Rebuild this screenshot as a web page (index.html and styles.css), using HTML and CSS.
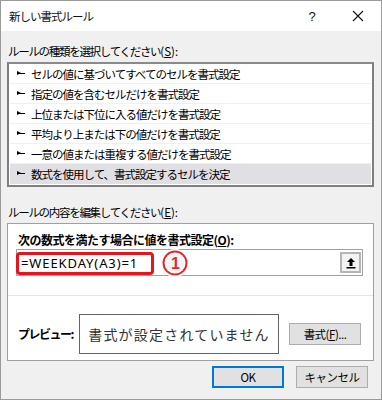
FILE: index.html
```html
<!DOCTYPE html>
<html lang="ja">
<head>
<meta charset="utf-8">
<link rel="stylesheet" href="styles.css">
</head>
<body>
<div class="window">
  <div class="titlebar">
    <span class="title">新しい書式ルール</span>
    <span class="help">?</span>
    <span class="close">
      <svg width="12" height="12" viewBox="0 0 12 12"><path d="M1 1 L11 11 M11 1 L1 11" stroke="#111" stroke-width="1.1" fill="none"/></svg>
    </span>
  </div>
  <div class="content">
    <div class="label label-top">ルールの種類を選択してください<span class="ascii">(<u>S</u>):</span></div>
    <div class="list">
      <div class="row"><span class="arrow"></span>セルの値に基づいてすべてのセルを書式設定</div>
      <div class="row"><span class="arrow"></span>指定の値を含むセルだけを書式設定</div>
      <div class="row"><span class="arrow"></span>上位または下位に入る値だけを書式設定</div>
      <div class="row"><span class="arrow"></span>平均より上または下の値だけを書式設定</div>
      <div class="row"><span class="arrow"></span>一意の値または重複する値だけを書式設定</div>
      <div class="row selected"><span class="arrow"></span>数式を使用して、書式設定するセルを決定</div>
    </div>
    <div class="label label-second">ルールの内容を編集してください<span class="ascii">(<u>E</u>):</span></div>
    <div class="panel">
      <div class="bold-label">次の数式を満たす場合に値を書式設定(<u>O</u>):</div>
      <div class="input">
        <span class="formula">=WEEKDAY(A3)=1</span>
        <span class="highlight"></span>
        <span class="badge">
          <svg width="28" height="28" viewBox="0 0 28 28">
            <circle cx="14" cy="14" r="11.5" fill="#f4f4f4" stroke="#ffffff" stroke-width="5"/>
            <circle cx="14" cy="14" r="11.5" fill="none" stroke="#e8262c" stroke-width="2"/>
            <text x="14" y="19.5" text-anchor="middle" font-family="Liberation Sans, sans-serif" font-size="16" font-weight="bold" fill="#e8262c">1</text>
          </svg>
        </span>
        <span class="collapse">
          <svg width="10" height="12" viewBox="0 0 10 12"><path d="M5 1 L9 5 L6.5 5 L6.5 9 L3.5 9 L3.5 5 L1 5 Z" fill="#000"/><rect x="0.5" y="10" width="9" height="1.5" fill="#000"/></svg>
        </span>
      </div>
      <div class="divider"></div>
      <div class="preview-row">
        <span class="bold-label preview-label">プレビュー:</span>
        <div class="preview">書式が設定されていません</div>
        <button class="btn format-btn">書式(<u>F</u>)...</button>
      </div>
    </div>
    <div class="footer">
      <button class="btn ok">OK</button>
      <button class="btn">キャンセル</button>
    </div>
  </div>
</div>
</body>
</html>
```

FILE: styles.css
```css
* { box-sizing: border-box; }
html, body { margin: 0; padding: 0; }
body {
  width: 382px;
  height: 400px;
  overflow: hidden;
  font-family: "Noto Sans CJK JP", "Noto Sans", sans-serif;
  font-size: 11.5px;
  letter-spacing: -1px;
  color: #000;
  background: #fff;
}
.window {
  width: 382px;
  height: 400px;
  border: 1px solid #9a9a9a;
  display: flex;
  flex-direction: column;
  background: #f0f0f0;
}
.titlebar {
  height: 30px;
  background: #fff;
  display: flex;
  align-items: center;
  flex-shrink: 0;
}
.title {
  padding-left: 8px;
  line-height: 16px;
  color: #111;
  flex: 1;
}
.help {
  width: 20px;
  font-family: "Liberation Sans", sans-serif;
  font-size: 13px;
  letter-spacing: 0;
  text-align: center;
  margin-right: 29px;
  color: #111;
}
.close {
  width: 14px;
  height: 14px;
  display: flex;
  align-items: center;
  justify-content: center;
  margin-right: 16px;
}
.content {
  flex: 1;
  padding: 0 7px 0 6px;
  display: flex;
  flex-direction: column;
}
u { text-decoration: underline; text-underline-offset: 1px; }
.label {
  line-height: 16px;
  height: 16px;
  padding-left: 1px;
  color: #000;
  letter-spacing: -1.3px;
}
.label .ascii { letter-spacing: 0; }
.label-top { margin-top: 12px; }
.list {
  margin-top: 3px;
  height: 125px;
  background: #fff;
  border: 2px solid #7f7f7f;
  border-top-color: #8a8a8a;
  padding: 0 1px 1px 1px;
}
.row {
  height: 20px;
  display: flex;
  align-items: center;
  border-bottom: 1px solid #f0f0f0;
  padding-left: 7px;
  line-height: 16px;
  white-space: nowrap;
}
.row.selected { background: #e0dfe3; border-bottom-color: #e0dfe3; }
.arrow {
  position: relative;
  width: 8px;
  height: 5px;
  margin-right: 6px;
  flex-shrink: 0;
}
.arrow::before {
  content: "";
  position: absolute;
  left: 0; top: 0;
  width: 0; height: 0;
  border-top: 2.5px solid transparent;
  border-bottom: 2.5px solid transparent;
  border-left: 4px solid #000;
}
.arrow::after {
  content: "";
  position: absolute;
  left: 0; top: 2px;
  width: 8px; height: 1px;
  background: #000;
}
.label-second { margin-top: 17px; }
.panel {
  margin-top: 3px;
  height: 138px;
  background: #fff;
  border: 1px solid #a0a0a0;
  padding: 8px 10px 0 8px;
  display: flex;
  flex-direction: column;
}
.bold-label {
  font-size: 12px;
  font-weight: bold;
  letter-spacing: -0.5px;
  line-height: 16px;
  height: 16px;
  padding-left: 2px;
  white-space: nowrap;
}
.input {
  position: relative;
  margin-top: 1px;
  height: 27px;
  border: 1px solid #a0a0a0;
  display: flex;
  align-items: center;
  justify-content: space-between;
  padding: 0 1px 0 4px;
}
.formula {
  font-family: "Noto Sans", sans-serif;
  font-size: 13px;
  letter-spacing: 0.9px;
  color: #000;
}
.highlight {
  position: absolute;
  left: -1px;
  top: 2px;
  width: 138px;
  height: 23px;
  border: 3px solid #e8141c;
  border-radius: 4px;
}
.badge {
  position: absolute;
  left: 144px;
  top: -1px;
  width: 28px;
  height: 28px;
}
.collapse {
  width: 21px;
  height: 21px;
  border: 2px solid #b5b5b5;
  background: #f3f3f3;
  display: flex;
  align-items: center;
  justify-content: center;
}
.divider {
  margin: 19px -10px 0 -8px;
  height: 1px;
  background: #e4e4e4;
}
.preview-row {
  margin-top: 18px;
  display: flex;
  align-items: center;
}
.preview-label {
  width: 63px;
  flex-shrink: 0;
  letter-spacing: -1.5px;
}
.preview {
  width: 200px;
  height: 40px;
  flex-shrink: 0;
  border: 1px solid #646464;
  display: flex;
  align-items: center;
  justify-content: center;
  font-size: 14px;
  letter-spacing: 1.2px;
  color: #333;
}
.btn {
  font-family: "Noto Sans CJK JP", "Noto Sans", sans-serif;
  font-size: 11.5px;
  letter-spacing: -0.5px;
  line-height: 16px;
  width: 72px;
  height: 22px;
  padding: 0;
  background: #e1e1e1;
  border: 1px solid #adadad;
  color: #000;
  flex-shrink: 0;
}
.format-btn { margin-left: 10px; }
.footer {
  margin-top: 5px;
  display: flex;
  justify-content: flex-end;
  gap: 12px;
  padding-right: 6px;
}
.btn.ok { border: 2px solid #0078d7; }
```
